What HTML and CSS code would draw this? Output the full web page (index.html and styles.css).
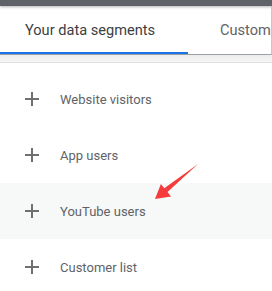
FILE: index.html
```html
<!DOCTYPE html>
<html lang="en">
<head>
  <meta charset="UTF-8" />
  <meta name="viewport" content="width=device-width, initial-scale=1.0"/>
  <title>Data segments</title>
  <link rel="stylesheet" href="styles.css">
</head>
<body>
  <div class="topbar"></div>

  <div class="tabs">
    <div class="tab active">Your data segments</div>
    <div class="tab">Custom</div>
  </div>
  <div class="band"></div>

  <div class="list">
    <div class="row">
      <svg class="plus" width="16" height="16" viewBox="0 0 16 16"><path d="M8 1v14M1 8h14" stroke="#707070" stroke-width="2"/></svg>
      <span>Website visitors</span>
    </div>
    <div class="row">
      <svg class="plus" width="16" height="16" viewBox="0 0 16 16"><path d="M8 1v14M1 8h14" stroke="#707070" stroke-width="2"/></svg>
      <span>App users</span>
    </div>
    <div class="row hover">
      <svg class="plus" width="16" height="16" viewBox="0 0 16 16"><path d="M8 1v14M1 8h14" stroke="#707070" stroke-width="2"/></svg>
      <span>YouTube users</span>
    </div>
    <div class="row">
      <svg class="plus" width="16" height="16" viewBox="0 0 16 16"><path d="M8 1v14M1 8h14" stroke="#707070" stroke-width="2"/></svg>
      <span>Customer list</span>
    </div>
  </div>

  <svg class="arrow" width="272" height="291" viewBox="0 0 272 291">
    <polygon points="155,199 160.9,184 164.3,188.3 198,164 167.5,192.1 171,196.4" fill="#f53b3b"/>
  </svg>
</body>
</html>
```

FILE: styles.css
```css
body {
  margin: 0;
  font-family: Roboto, "Liberation Sans", sans-serif;
  background-color: #fff;
  width: 272px;
  height: 291px;
  overflow: hidden;
  position: relative;
}

.topbar {
  height: 6px;
  background-color: #5f6368;
  box-shadow: 0 1px 3px rgba(0, 0, 0, 0.3);
}

.tabs {
  display: flex;
  height: 48px;
  border-bottom: 1px solid #9aa0a6;
  border-right: 1px solid #c8c8c8;
  white-space: nowrap;
  overflow: hidden;
}

.tab {
  display: flex;
  align-items: center;
  flex-shrink: 0;
  font-size: 14.6px;
  color: #5f6368;
  padding-left: 32px;
}

.tab.active {
  width: 163px;
  padding-left: 25px;
  color: #3c4043;
  box-shadow: inset 0 -2px 0 #1a73e8;
}

.band {
  height: 7px;
  background: linear-gradient(#ececec, #f6f6f6);
  border-bottom: 1px solid #e2e2e2;
}

.list {
  padding-top: 8px;
}

.row {
  display: flex;
  align-items: center;
  height: 56px;
  padding-left: 24px;
  font-size: 13px;
  color: #5f6368;
}

.row.hover {
  background-color: #f7f8f8;
}

.plus {
  margin-right: 20px;
}

.arrow {
  position: absolute;
  left: 0;
  top: 0;
}
```
